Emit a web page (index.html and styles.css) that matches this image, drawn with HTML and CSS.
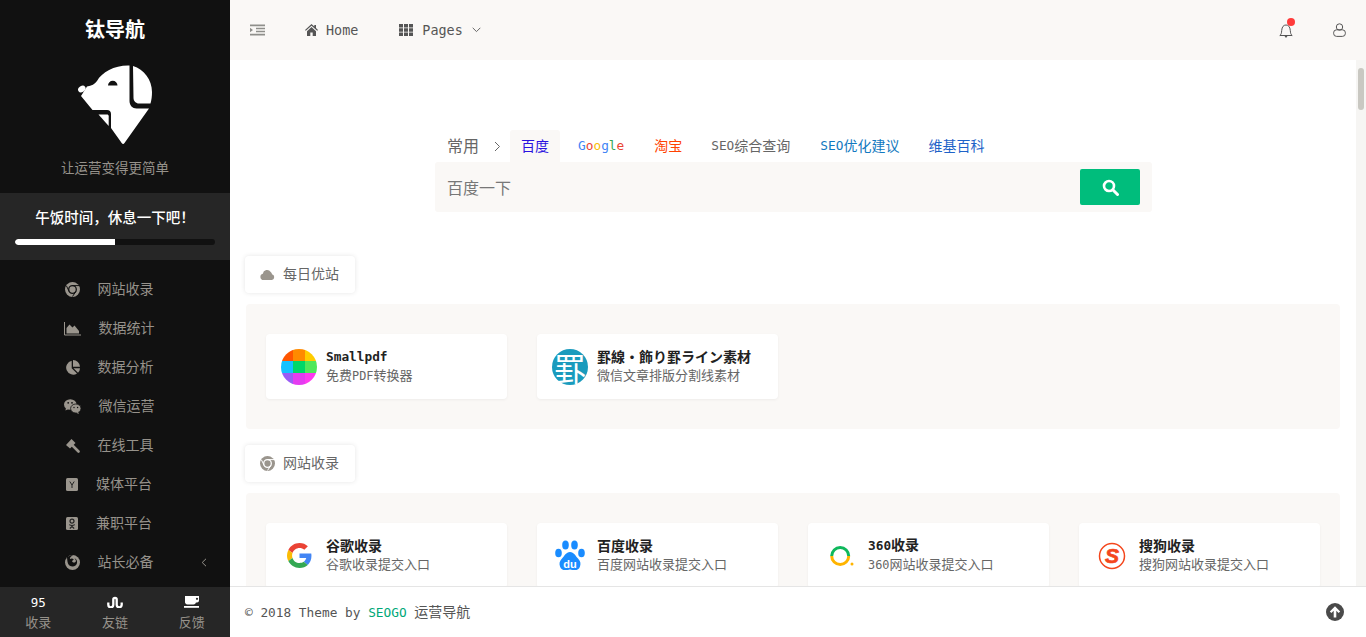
FILE: index.html
```html
<!DOCTYPE html>
<html lang="zh-CN">
<head>
<meta charset="utf-8">
<title>钛导航</title>
<link rel="stylesheet" href="styles.css">
</head>
<body>
<aside class="sidebar">
  <div class="brand">
    <div class="brand-name">钛导航</div>
    <svg class="brand-logo" viewBox="0 0 77 82" width="77" height="82">
      <path fill="#fff" d="M56 2C67 5 75 16 75 28c0 4-.5 8-1.500 11.500H62c-3 0-5.500-2.500-5.500-5.500z"/>
      <path fill="#fff" fill-rule="evenodd" d="M52.500 1.500V37c0 4.500 3 7.500 7 7.500H72L47.500 79c-.8 1.200-2 1.200-2.800 0L34 64V50c0-2.500-1.500-4-4-4H15.500L4 32 10 22.500c4.500-.5 8-2.500 10-5.500C25 8 38 1 52.500 1.500zM31 21.500a4.700 4.700 0 0 1 9.500 0z"/>
      <ellipse fill="#fff" cx="4.800" cy="25" rx="4" ry="3" transform="rotate(-35 4.800 25)"/>
      <path fill="#fff" d="M21.500 50.500H30c1 0 1.700.7 1.700 1.700V62z"/>
    </svg>
    <div class="brand-tag">让运营变得更简单</div>
  </div>
  <div class="status">
    <div class="status-text">午饭时间，休息一下吧！</div>
    <div class="progress"><div class="progress-fill" style="width:50%"></div></div>
  </div>
  <nav class="menu">
    <a class="menu-item"><svg class="mi w15" viewBox="0 0 15 15"><circle cx="7.500" cy="7.500" r="7.500"/><circle cx="7.500" cy="7.500" r="3.800" fill="#9a958d" stroke="#111" stroke-width="1.300"/><path d="M7.500 3.600h6.500M4.200 9.500L1.500 4M10.800 9.500L7.500 14.500" stroke="#111" stroke-width="1"/></svg><span>网站收录</span></a>
    <a class="menu-item"><svg class="mi w17" viewBox="0 0 17 15"><path d="M.5 1v13h16.500" fill="none" stroke="currentColor"/><path d="M2.500 12.500V7l3-3.500 3 3 2-2 4.500 5.500v2.500z"/></svg><span>数据统计</span></a>
    <a class="menu-item"><svg class="mi w15" viewBox="0 0 15 15"><path d="M6.700.8v7.500l5.300 5.200A7 7 0 1 1 6.700.8z"/><path d="M8 0a7 7 0 0 1 7 6.800H8z"/><path d="M8.500 8.200H15a7 7 0 0 1-2 4.600z"/></svg><span>数据分析</span></a>
    <a class="menu-item"><svg class="mi w17" viewBox="0 0 17 15"><ellipse cx="6.300" cy="5.500" rx="6.300" ry="5.300"/><path d="M2 8.500l-.5 3 3-1.500z"/><ellipse cx="11.800" cy="9.500" rx="5.200" ry="4.500" stroke="#111" stroke-width=".8"/><path d="M14 13l1 2-3-1.200z"/><circle cx="4.200" cy="3.800" r=".9" fill="#111"/><circle cx="8" cy="3.800" r=".9" fill="#111"/><circle cx="10" cy="8.500" r=".7" fill="#111"/><circle cx="13.600" cy="8.500" r=".7" fill="#111"/></svg><span>微信运营</span></a>
    <a class="menu-item"><svg class="mi w15" viewBox="0 0 15 15"><path d="M1 7l5.500-6 4 4L5 10.500z"/><path d="M7.500 7.500l6 6" stroke="currentColor" stroke-width="2.600" stroke-linecap="round"/></svg><span>在线工具</span></a>
    <a class="menu-item"><svg class="mi w12" viewBox="0 0 12 13"><rect width="12" height="13" rx="1.500"/><path d="M3.800 3.500L6 7l2.200-3.500M6 7v3" fill="none" stroke="#222" stroke-width="1"/></svg><span>媒体平台</span></a>
    <a class="menu-item"><svg class="mi w12" viewBox="0 0 12 13"><rect width="12" height="13" rx="1.500"/><circle cx="6" cy="4.200" r="2" fill="none" stroke="#222" stroke-width="1.200"/><path d="M3.200 7.600c1.800 1.200 3.800 1.200 5.600 0M6 8.500v1M3.800 11.500L6 9.500l2.200 2" fill="none" stroke="#222" stroke-width="1.100"/></svg><span>兼职平台</span></a>
    <a class="menu-item"><svg class="mi w15" viewBox="0 0 15 15"><circle cx="7.500" cy="7.500" r="7.500"/><path d="M2 2.500C1 .8 2.200.2 3.500 1.500 5 0 7 0 8 .5 5.500 1 4.500 3.500 5 4c1.500-1 3-.5 3.800.5L7 6c.5 1.500 2 2 3.200 1.300C11.500 6.500 11 4.500 9.500 3.500c3 .5 3.500 5 1 7-2.500 1.800-6.500.8-7.500-2C2.300 6.500 2.300 4.500 2 2.500z" fill="#111"/></svg><span>站长必备</span><svg class="menu-caret" viewBox="0 0 6 9" width="6" height="9"><path d="M5 .8L1.200 4.500 5 8.200" fill="none" stroke="currentColor"/></svg></a>
  </nav>
  <div class="side-foot">
    <a class="foot-item"><span class="foot-top en-plain">95</span><span class="foot-label">收录</span></a>
    <a class="foot-item"><span class="foot-top"><svg viewBox="0 0 16 12" width="16" height="12"><path d="M1.300 6.500v2.300a2.500 2.500 0 0 0 5 0V3.500a1.700 1.700 0 0 1 3.400 0v5.300a2.500 2.500 0 0 0 5 0V6.500" fill="none" stroke="#fff" stroke-width="2.300"/></svg></span><span class="foot-label">友链</span></a>
    <a class="foot-item"><span class="foot-top"><svg viewBox="0 0 15 12" width="15" height="12"><path fill="#fff" d="M1 0h14v4.500a2 2 0 0 1-2 2h-1A3 3 0 0 1 9.500 8.500h-6A2.800 2.800 0 0 1 1 5.500z"/><circle cx="13" cy="2.800" r="1.100" fill="#262626"/><rect y="10" width="15" height="1.800" fill="#fff"/></svg></span><span class="foot-label">反馈</span></a>
  </div>
</aside>

<div class="main">
  <header class="topbar">
    <svg class="tb-indent" viewBox="0 0 15 12" width="15" height="12"><path d="M0 .5h15v1.800H0zM6 3.800h9v1.500H6zM6 6.800h9v1.500H6zM0 9.800h15v1.800H0zM0 3.800l3 2.200-3 2.300z" fill="#8f8f8b"/></svg>
    <a class="tb-link home"><svg viewBox="0 0 13 12" width="13" height="12"><path fill="#555" d="M6.500 0L0 5.900l.8.900 5.700-5.100 5.700 5.100.8-.9-2-1.800V1H9.300v1.400zM2 7.200V12h3.300V8.500h2.400V12H11V7.200L6.500 3.100z"/></svg><span class="en">Home</span></a>
    <a class="tb-link pages"><svg viewBox="0 0 14 12" width="14" height="12"><path fill="#555" d="M0 0h4v3.500H0zM5 0h4v3.500H5zM10 0h4v3.500h-4zM0 4.300h4v3.400H0zM5 4.300h4v3.400H5zM10 4.300h4v3.400h-4zM0 8.500h4V12H0zM5 8.500h4V12H5zM10 8.500h4V12h-4z"/></svg><span class="en">Pages</span><svg viewBox="0 0 9 6" width="9" height="6"><path d="M.7.8l3.800 3.800L8.300.8" fill="none" stroke="#666"/></svg></a>
    <div class="tb-right">
      <span class="bell"><svg viewBox="0 0 14 15" width="14" height="15"><path d="M.8 12.500c1.500-1 1.700-2.500 1.900-5C3 3.800 4.500 2 7 2s4 1.800 4.300 5.500c.2 2.500.4 4 1.900 5z" fill="none" stroke="#555"/><path d="M5.500 13h3L7 15z" fill="#555"/></svg><i class="bell-dot"></i></span>
      <svg viewBox="0 0 13 14" width="13" height="14"><circle cx="6.500" cy="4" r="3.200" fill="none" stroke="#555"/><rect x=".6" y="6.800" width="11.800" height="6.600" rx="3" fill="none" stroke="#555"/></svg>
    </div>
  </header>

  <div class="viewport">
    <main class="content">
      <section class="search">
        <div class="tabs">
          <span class="tabs-label">常用</span>
          <svg class="tabs-arrow" viewBox="0 0 7 11" width="7" height="11"><path d="M1 1l4.500 4.500L1 10" fill="none" stroke="#666"/></svg>
          <a class="tab active c-baidu">百度</a>
          <a class="tab en"><b class="gb">G</b><b class="gr">o</b><b class="gy">o</b><b class="gb">g</b><b class="gg">l</b><b class="gr">e</b></a>
          <a class="tab c-taobao">淘宝</a>
          <a class="tab c-seo"><span class="en">SEO</span>综合查询</a>
          <a class="tab c-opt"><span class="en">SEO</span>优化建议</a>
          <a class="tab c-wiki">维基百科</a>
        </div>
        <div class="search-box">
          <span class="search-ph">百度一下</span>
          <button class="search-btn"><svg viewBox="0 0 17 17" width="17" height="17"><circle cx="7" cy="7" r="5" fill="none" stroke="#fff" stroke-width="2.600"/><path d="M10.800 10.800l4.700 4.700" stroke="#fff" stroke-width="3" stroke-linecap="round"/></svg></button>
        </div>
      </section>

      <section class="group">
        <h2 class="group-title"><svg viewBox="0 0 15 11" width="15" height="11"><path fill="#9a958d" d="M3.500 11a3.200 3.200 0 0 1-.7-6.300A4.300 4.300 0 0 1 10.700 3 3 3 0 0 1 12 5.200 3 3 0 0 1 12 11z"/></svg><span>每日优站</span></h2>
        <div class="panel">
          <a class="card">
            <svg class="card-icon" viewBox="0 0 36 36"><clipPath id="sp"><circle cx="18" cy="18" r="18"/></clipPath><g clip-path="url(#sp)"><rect width="12" height="12" fill="#ff5500"/><rect x="12" width="12" height="12" fill="#ff8a00"/><rect x="24" width="12" height="12" fill="#ffcc00"/><rect y="12" width="12" height="12" fill="#14c2ff"/><rect x="12" y="12" width="12" height="12" fill="#00d768"/><rect x="24" y="12" width="12" height="12" fill="#4fe85a"/><rect y="24" width="12" height="12" fill="#9a5cf5"/><rect x="12" y="24" width="12" height="12" fill="#e43cf0"/><rect x="24" y="24" width="12" height="12" fill="#ff3af0"/></g></svg>
            <div class="card-body"><div class="card-title"><span class="en">Smallpdf</span></div><div class="card-sub">免费<span class="en">PDF</span>转换器</div></div>
          </a>
          <a class="card">
            <span class="card-icon kei">罫</span>
            <div class="card-body"><div class="card-title">罫線・飾り罫ライン素材</div><div class="card-sub">微信文章排版分割线素材</div></div>
          </a>
        </div>
      </section>

      <section class="group">
        <h2 class="group-title"><svg viewBox="0 0 15 15" width="15" height="15"><circle cx="7.500" cy="7.500" r="7.500" fill="#9a958d"/><circle cx="7.500" cy="7.500" r="3.800" fill="#9a958d" stroke="#fff" stroke-width="1.300"/><path d="M7.500 3.600h6.500M4.200 9.500L1.500 4M10.800 9.500L7.500 14.500" stroke="#fff" stroke-width="1"/></svg><span>网站收录</span></h2>
        <div class="panel">
          <a class="card">
            <span class="card-icon"><svg viewBox="0 0 48 48" width="25" height="25"><path fill="#EA4335" d="M24 9.500c3.540 0 6.710 1.220 9.210 3.600l6.850-6.850C35.900 2.380 30.470 0 24 0 14.620 0 6.510 5.380 2.560 13.220l7.980 6.190C12.430 13.720 17.740 9.500 24 9.500z"/><path fill="#4285F4" d="M46.980 24.550c0-1.570-.15-3.090-.38-4.550H24v9.020h12.940c-.58 2.960-2.260 5.480-4.780 7.180l7.730 6c4.510-4.180 7.090-10.360 7.090-17.650z"/><path fill="#FBBC05" d="M10.530 28.590c-.48-1.450-.76-2.990-.76-4.590s.27-3.140.76-4.590l-7.980-6.190C.92 16.460 0 20.120 0 24c0 3.880.92 7.540 2.560 10.780l7.970-6.190z"/><path fill="#34A853" d="M24 48c6.480 0 11.930-2.130 15.890-5.810l-7.730-6c-2.150 1.450-4.920 2.300-8.160 2.300-6.260 0-11.570-4.220-13.470-9.910l-7.980 6.190C6.510 42.620 14.620 48 24 48z"/></svg></span>
            <div class="card-body"><div class="card-title">谷歌收录</div><div class="card-sub">谷歌收录提交入口</div></div>
          </a>
          <a class="card">
            <span class="card-icon"><svg viewBox="0 0 30 32" width="30" height="32"><g fill="#1a8cff"><ellipse cx="3.500" cy="13" rx="3.300" ry="4.300"/><ellipse cx="10.500" cy="5" rx="3.300" ry="4.500"/><ellipse cx="19.500" cy="5" rx="3.300" ry="4.500"/><ellipse cx="26.500" cy="13" rx="3.300" ry="4.300"/><path d="M15 12c4 0 5.500 4 8 6.500 2.500 2.500 3 5 2 8-1 3-3.500 4-6.500 3.500-2-.3-3-.6-3.500-.6s-1.500.3-3.500.6c-3 .5-5.500-.5-6.500-3.500s-.5-5.500 2-8C9.500 16 11 12 15 12z"/></g><text x="15" y="28" class="baidu-du">du</text></svg></span>
            <div class="card-body"><div class="card-title">百度收录</div><div class="card-sub">百度网站收录提交入口</div></div>
          </a>
          <a class="card">
            <span class="card-icon"><svg viewBox="0 0 26 24" width="26" height="24"><path d="M3.700 12a8.500 8.500 0 0 1 17 0" fill="none" stroke="#0fb85c" stroke-width="3"/><path d="M3.700 12a8.500 8.500 0 0 0 17 0" fill="none" stroke="#ffb400" stroke-width="3"/><circle cx="24" cy="20" r="1.500" fill="#ffb400"/></svg></span>
            <div class="card-body"><div class="card-title"><span class="en">360</span>收录</div><div class="card-sub"><span class="en">360</span>网站收录提交入口</div></div>
          </a>
          <a class="card">
            <span class="card-icon"><svg viewBox="0 0 28 28" width="28" height="28"><circle cx="14" cy="14" r="12.500" fill="none" stroke="#f4461c" stroke-width="1.500"/><text x="14" y="21" class="sogou-s">S</text></svg></span>
            <div class="card-body"><div class="card-title">搜狗收录</div><div class="card-sub">搜狗网站收录提交入口</div></div>
          </a>
        </div>
      </section>
    </main>
    <div class="scrollbar"><div class="scrollbar-thumb"></div></div>
  </div>

  <footer class="footer">
    <span class="footer-text"><span class="en">© 2018 Theme by <a class="footer-link">SEOGO</a> </span>运营导航</span>
    <svg viewBox="0 0 18 18" width="18" height="18"><circle cx="9" cy="9" r="9" fill="#4a4a4a"/><path d="M9 3.200L14.200 8.500 12.600 10 10.300 7.700V14.500H7.700V7.700L5.400 10 3.800 8.500z" fill="#fff"/></svg>
  </footer>
</div>
</body>
</html>
```
FILE: styles.css
```css
* { box-sizing: border-box; }
html, body { height: 100%; }
body {
  margin: 0;
  height: 100vh;
  overflow: hidden;
  display: flex;
  font-family: "Noto Sans CJK SC", "Noto Sans", sans-serif;
  font-size: 14px;
  color: #555;
  background: #fff;
}
a { color: inherit; text-decoration: none; }
.en { font-family: "DejaVu Sans Mono", "Noto Sans CJK SC", monospace; font-size: .914em; }

/* sidebar */
.sidebar { width: 230px; flex: none; height: 100%; background: #111; display: flex; flex-direction: column; color: #9a958d; }
.brand { display: flex; flex-direction: column; align-items: center; padding: 19px 0 16px; }
.brand-name { font-size: 20px; line-height: 20px; font-weight: 700; color: #fff; }
.brand-logo { margin: 25px 0 11px; display: block; }
.brand-tag { font-size: 13.500px; line-height: 20px; color: #96928b; }
.status { background: #262626; padding: 15px 15px; height: 67px; }
.status-text { font-size: 14.500px; font-weight: 500; line-height: 18px; color: #fff; text-align: center; }
.progress { height: 6px; margin-top: 13px; border-radius: 3px; background: #111; overflow: hidden; }
.progress-fill { height: 100%; background: #fff; border-radius: 3px 0 0 3px; }
.menu { flex: 1; padding-top: 10px; }
.menu-item { position: relative; height: 39px; display: flex; align-items: center; justify-content: center; gap: 18px; padding-right: 12px; font-size: 14px; color: #96928b; }
.menu-item span { padding-bottom: 4px; }
.mi { fill: currentColor; color: #9a958d; height: 15px; flex: none; }
.w12 { width: 12px; }
.w15 { width: 15px; }
.w17 { width: 17px; }
.menu-caret { position: absolute; right: 23px; top: 15px; }
.side-foot { height: 50px; background: #262626; display: grid; grid-template-columns: repeat(3, 1fr); padding-top: 6px; }
.foot-item { display: flex; flex-direction: column; align-items: center; }
.foot-top { height: 18px; display: flex; align-items: center; color: #fff; font-size: 13px; }
.en-plain { font-family: "DejaVu Sans Mono", monospace; font-size: 12.500px; }
.foot-label { margin-top: 2px; font-size: 13px; line-height: 18px; color: #96928b; }

/* main column */
.main { flex: 1; min-width: 0; display: flex; flex-direction: column; height: 100%; }
.topbar { height: 60px; flex: none; background: #faf8f6; display: flex; align-items: center; padding: 0 20px; font-size: 14.700px; color: #555; }
.tb-link { display: flex; align-items: center; }
.home { margin-left: 40px; gap: 8px; }
.pages { margin-left: 41px; gap: 9px; }
.tb-right { margin-left: auto; display: flex; align-items: center; gap: 40px; }
.bell { position: relative; display: flex; }
.bell-dot { position: absolute; right: -2px; top: -5px; width: 8px; height: 8px; border-radius: 50%; background: #ff3b3b; }

.viewport { flex: 1; min-height: 0; display: flex; }
.content { flex: 1; min-width: 0; overflow: hidden; background: #fff; padding: 70px 16px 0; }
.scrollbar { width: 10px; flex: none; background: #f6f5f3; padding: 8px 2px 0; }
.scrollbar-thumb { height: 42px; border-radius: 3px; background: #c9c8c2; }

.search { width: 717px; margin: 0 0 44px 189px; }
.tabs { display: flex; align-items: center; height: 32px; padding-left: 12px; font-size: 14px; }
.tabs-label { font-size: 16px; color: #666; padding-bottom: 2px; }
.tabs-arrow { margin: 0 9px 0 15px; }
.tab { height: 32px; display: flex; align-items: center; padding: 0 11px 2px; border-radius: 3px 3px 0 0; margin-right: 8px; }
.tab b { font-weight: 400; }
.active { background: #faf8f6; margin-right: 7px; }
.c-baidu { color: #2a12e0; }
.c-taobao { color: #ff4200; margin-right: 7px; }
.c-seo { color: #666; }
.c-opt { color: #1279c0; margin-right: 7px; }
.c-wiki { color: #1f63c8; }
.gb { color: #4285f4; }
.gr { color: #ea4335; }
.gy { color: #fbbc05; }
.gg { color: #34a853; }
.search-box { height: 50px; background: #faf8f6; border-radius: 3px; display: flex; align-items: center; padding: 0 12px; }
.search-ph { font-size: 16px; color: #777; }
.search-btn { margin-left: auto; width: 60px; height: 36px; border: 0; border-radius: 2px; background: #00bd7c; display: flex; align-items: center; justify-content: center; padding: 0; }

.group { margin-bottom: 16px; }
.group-title { margin: 0 0 11px -1px; width: 110px; height: 37px; background: #fff; border-radius: 4px; box-shadow: 0 0 5px rgba(0,0,0,.1); display: flex; align-items: center; gap: 8px; padding-left: 15px; font-size: 14px; font-weight: 400; color: #666; }
.group-title span { padding-bottom: 4px; }
.panel { background: #faf8f6; border-radius: 4px; padding: 30px 20px; display: grid; grid-template-columns: repeat(4, 241px); gap: 30px; }
.card { height: 65px; background: #fff; border-radius: 4px; box-shadow: 0 1px 3px rgba(0,0,0,.05); display: flex; align-items: center; padding: 0 15px; gap: 9px; }
.card-icon { width: 36px; height: 36px; flex: none; display: flex; align-items: center; justify-content: center; }
.kei { border-radius: 50%; background: #1a9bbd; color: #fff; font-family: "Noto Sans CJK JP", sans-serif; font-weight: 400; font-size: 32px; line-height: 36px; }
.card-body { min-width: 0; padding-bottom: 3px; }
.card-title { font-size: 14px; font-weight: 700; line-height: 19px; color: #222; }
.card-sub { font-size: 13px; line-height: 18px; color: #666; }
.baidu-du { fill: #fff; font: 700 11px "Liberation Sans", sans-serif; text-anchor: middle; }
.sogou-s { fill: #f4461c; stroke: #f4461c; stroke-width: .7; font: italic 700 21px "Liberation Sans", sans-serif; text-anchor: middle; }

.footer { height: 51px; flex: none; background: #fff; border-top: 1px solid #e5e5e5; display: flex; align-items: center; justify-content: space-between; padding: 0 22px 0 15px; font-size: 14px; color: #555; }
.footer-text { padding-bottom: 2px; }
.footer-link { color: #00a878; }
```
